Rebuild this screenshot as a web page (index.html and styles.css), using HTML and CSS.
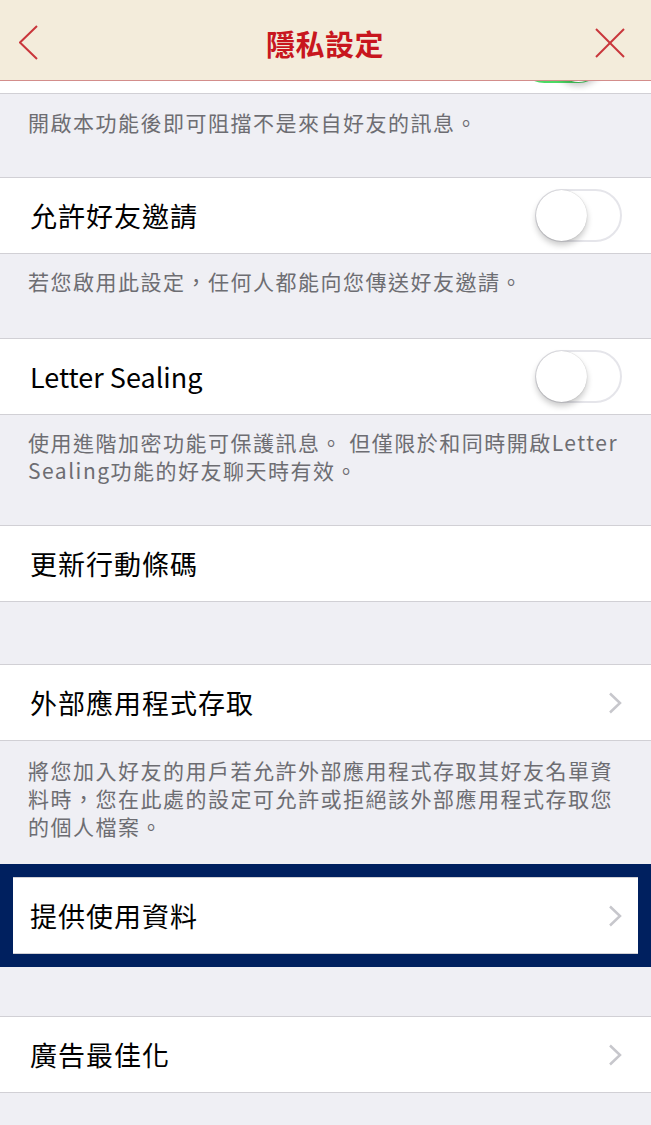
FILE: index.html
```html
<!DOCTYPE html>
<html lang="zh-Hant">
<head>
<meta charset="utf-8">
<title>隱私設定</title>
<link rel="stylesheet" href="styles.css">
</head>
<body>
<div class="screen">
  <header class="navbar">
    <div class="nav-left">
      <svg class="icon-back" width="20" height="36" viewBox="0 0 20 36"><polyline points="18,1 1,17.5 18,34" fill="none" stroke="#c9363b" stroke-width="2"/></svg>
    </div>
    <h1 class="nav-title">隱私設定</h1>
    <div class="nav-right">
      <svg class="icon-close" width="30" height="30" viewBox="0 0 30 30"><line x1="1" y1="1" x2="29" y2="29" stroke="#c9363b" stroke-width="2"/><line x1="29" y1="1" x2="1" y2="29" stroke="#c9363b" stroke-width="2"/></svg>
    </div>
  </header>

  <div class="content">
    <div class="row-partial">
      <div class="toggle on"><span class="knob"></span></div>
    </div>
    <div class="desc desc-1"><p>開啟本功能後即可阻擋不是來自好友的訊息。</p></div>

    <div class="row">
      <span class="label">允許好友邀請</span>
      <div class="toggle"><span class="knob"></span></div>
    </div>
    <div class="desc desc-2"><p>若您啟用此設定，任何人都能向您傳送好友邀請。</p></div>

    <div class="row">
      <span class="label latin">Letter Sealing</span>
      <div class="toggle"><span class="knob"></span></div>
    </div>
    <div class="desc desc-3"><p>使用進階加密功能可保護訊息。 但僅限於和同時開啟Letter Sealing功能的好友聊天時有效。</p></div>

    <div class="row">
      <span class="label">更新行動條碼</span>
    </div>
    <div class="gap gap-1"></div>

    <div class="row">
      <span class="label">外部應用程式存取</span>
      <svg class="chev" width="14" height="22" viewBox="0 0 14 22"><polyline points="2,1.5 12,11 2,20.5" fill="none" stroke="#c7c7cc" stroke-width="2.5"/></svg>
    </div>
    <div class="desc desc-4"><p>將您加入好友的用戶若允許外部應用程式存取其好友名單資料時，您在此處的設定可允許或拒絕該外部應用程式存取您的個人檔案。</p></div>

    <div class="highlight">
      <div class="row">
        <span class="label">提供使用資料</span>
        <svg class="chev" width="14" height="22" viewBox="0 0 14 22"><polyline points="2,1.5 12,11 2,20.5" fill="none" stroke="#c7c7cc" stroke-width="2.5"/></svg>
      </div>
    </div>
    <div class="gap gap-2"></div>

    <div class="row">
      <span class="label">廣告最佳化</span>
      <svg class="chev" width="14" height="22" viewBox="0 0 14 22"><polyline points="2,1.5 12,11 2,20.5" fill="none" stroke="#c7c7cc" stroke-width="2.5"/></svg>
    </div>
    <div class="gap gap-3"></div>
  </div>
</div>
</body>
</html>
```
FILE: styles.css
```css
* { box-sizing: border-box; }
html, body {
  margin: 0;
  padding: 0;
  background: #efeff4;
}
body {
  font-family: "Noto Sans CJK TC", "Noto Sans", sans-serif;
  width: 651px;
  height: 1125px;
  overflow: hidden;
}
.screen {
  display: flex;
  flex-direction: column;
  width: 651px;
}
.navbar {
  height: 81px;
  background: #f3ecdb;
  border-bottom: 1px solid #d38d8b;
  display: grid;
  grid-template-columns: 1fr auto 1fr;
  align-items: center;
  padding: 5px 26px 0 19px;
}
.nav-left { display: flex; justify-content: flex-start; }
.nav-right { display: flex; justify-content: flex-end; }
.icon-back { display: block; }
.icon-close { display: block; }
.nav-title {
  margin: 0;
  font-size: 29px;
  font-weight: 700;
  color: #c8161e;
  letter-spacing: 0.5px;
  line-height: 36px;
  transform: translateX(3px);
}
.content {
  display: flex;
  flex-direction: column;
}
.row-partial {
  height: 13px;
  background: #fff;
  border-bottom: 1px solid #d1d0d5;
  overflow: hidden;
  display: flex;
  justify-content: flex-end;
  align-items: flex-end;
  padding: 0 46px 10px 0;
}
.row {
  height: 77px;
  background: #fff;
  border-top: 1px solid #d1d0d5;
  border-bottom: 1px solid #d1d0d5;
  display: flex;
  align-items: center;
  justify-content: space-between;
  padding: 0 29px 0 30px;
}
.label {
  font-size: 27px;
  color: #000;
  letter-spacing: 1px;
  line-height: 36px;
}
.label.latin { letter-spacing: 0; }
.desc {
  color: #6d6d72;
  font-size: 21px;
  letter-spacing: 1.5px;
  line-height: 28px;
  padding: 0 20px 0 28px;
}
.desc p { margin: 0; }
.desc-1 { height: 83px; padding-top: 14px; }
.desc-2 { height: 84px; padding-top: 13px; }
.desc-3 { height: 110px; padding-top: 13px; }
.desc-4 { height: 123px; padding-top: 15px; padding-right: 22px; }
.gap-1 { height: 62px; }
.gap-2 { height: 49px; }
.gap-3 { height: 40px; }
.highlight {
  border: 13px solid #00205f;
}
.highlight .row {
  height: 77px;
  padding-left: 17px;
  padding-right: 16px;
}
.chev { display: block; }
.toggle {
  position: relative;
  width: 87px;
  height: 53px;
  border-radius: 27px;
  border: 2px solid #e5e5ea;
  background: #fff;
  flex: none;
}
.toggle .knob {
  position: absolute;
  top: -1px;
  left: -1px;
  width: 51px;
  height: 51px;
  border-radius: 50%;
  background: #fff;
  box-shadow: 0 4px 6px rgba(0,0,0,0.22), 0 0 1px rgba(0,0,0,0.25);
}
.toggle.on {
  background: #4cd964;
  border-color: #4cd964;
}
.toggle.on .knob {
  left: auto;
  right: -1px;
}
```
